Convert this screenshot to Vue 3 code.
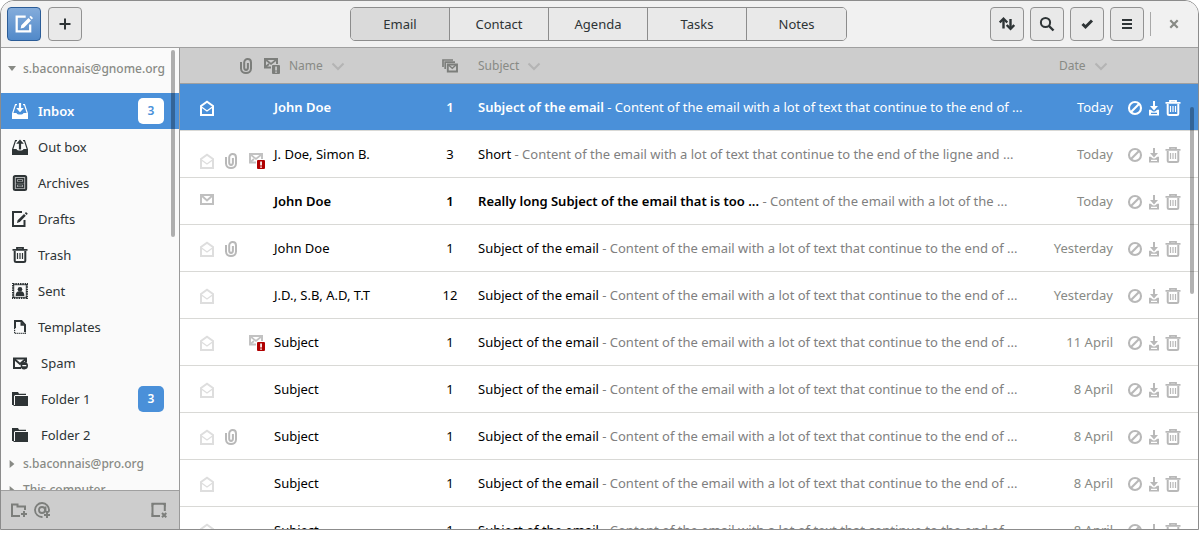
<script setup>
import { ref } from 'vue'

const tabs = ['Email', 'Contact', 'Agenda', 'Tasks', 'Notes']
const activeTab = ref('Email')

const folders = [
  { name: 'Inbox', icon: 'inbox', count: 3 },
  { name: 'Out box', icon: 'outbox' },
  { name: 'Archives', icon: 'archive' },
  { name: 'Drafts', icon: 'draft' },
  { name: 'Trash', icon: 'trash' },
  { name: 'Sent', icon: 'stamp' },
  { name: 'Templates', icon: 'template' },
  { name: 'Spam', icon: 'spam', wide: true },
  { name: 'Folder 1', icon: 'folder', count: 3, wide: true },
  { name: 'Folder 2', icon: 'folder', wide: true },
]
const activeFolder = ref('Inbox')

const long = 'Content of the email with a lot of text that continue to the end of ...'
const mails = [
  { from: 'John Doe', n: 1, subject: 'Subject of the email', text: long, date: 'Today', selected: true, strong: true },
  { from: 'J. Doe, Simon B.', n: 3, subject: 'Short', text: 'Content of the email with a lot of text that continue to the end of the ligne and ...', date: 'Today', clip: true, flag: true, low: true },
  { from: 'John Doe', n: 1, subject: 'Really long Subject of the email that is too ...', text: 'Content of the email with a lot of the ...', date: 'Today', unread: true, strong: true },
  { from: 'John Doe', n: 1, subject: 'Subject of the email', text: long, date: 'Yesterday', clip: true },
  { from: 'J.D., S.B, A.D, T.T', n: 12, subject: 'Subject of the email', text: long, date: 'Yesterday' },
  { from: 'Subject', n: 1, subject: 'Subject of the email', text: long, date: '11 April', flag: true },
  { from: 'Subject', n: 1, subject: 'Subject of the email', text: long, date: '8 April' },
  { from: 'Subject', n: 1, subject: 'Subject of the email', text: long, date: '8 April', clip: true },
  { from: 'Subject', n: 1, subject: 'Subject of the email', text: long, date: '8 April' },
  { from: 'Subject', n: 1, subject: 'Subject of the email', text: long, date: '8 April' },
]
const actions = [
  { icon: 'block', label: 'Block' },
  { icon: 'save', label: 'Save' },
  { icon: 'trash', label: 'Delete' },
]
</script>

<template>
  <svg class="sprite" aria-hidden="true">
    <symbol id="compose" viewBox="0 0 16 16">
      <path d="M9.500 1.500H1.500v13h12V8.500" fill="none" stroke="currentColor" stroke-width="2" />
      <path d="M5 12l.6-3L12 2.600l2.200 2.200L7.900 11.300z M12.800 1.800L14 .6l2 2-1.100 1.300z" fill="currentColor" />
    </symbol>
    <symbol id="draft" viewBox="0 0 16 16">
      <path d="M10 1H1v14h11.500V9" fill="none" stroke="currentColor" stroke-width="2" />
      <path d="M5 12l.6-2.800L12 3l1.800 1.800L7.800 11z M12.800 2.200L14 1l1.800 1.800-1.200 1.200z" fill="currentColor" />
    </symbol>
    <symbol id="inbox" viewBox="0 0 16 16">
      <path d="M0 10h4.500c.5 2 6.500 2 7 0H16v6H0z" fill="currentColor" />
      <path d="M.6 10.500L3.500 1.600H5M15.400 10.500l-2.900-8.900H11" fill="none" stroke="currentColor" stroke-width="1.200" />
      <path d="M6.900 0h2.200v5h2.700L8 9.200 4.200 5h2.700z" fill="currentColor" />
    </symbol>
    <symbol id="outbox" viewBox="0 0 16 16">
      <path d="M0 10h4.500c.5 2 6.500 2 7 0H16v6H0z" fill="currentColor" />
      <path d="M.6 10.500L3.500 1.600H5M15.400 10.500l-2.900-8.900H11" fill="none" stroke="currentColor" stroke-width="1.200" />
      <path d="M6.900 10.500h2.200V4.700h2.700L8 .5 4.200 4.700h2.700z" fill="currentColor" />
    </symbol>
    <symbol id="archive" viewBox="0 0 16 16">
      <rect x="1.800" y="1" width="12.400" height="14" rx="1.500" fill="currentColor" fill-opacity=".35" stroke="currentColor" stroke-width="2" />
      <path d="M4.500 3.700h7v3.600h-7zM4.500 9h7v3.600h-7z" fill="none" stroke="currentColor" stroke-width="1.300" />
      <path d="M6 5h4v1.300H6zM6 10.300h4v1.300H6z" fill="currentColor" />
    </symbol>
    <symbol id="trash" viewBox="0 0 16 16">
      <path d="M2.700 4v9.500q0 1.500 1.500 1.500h7.600q1.500 0 1.500-1.500V4" fill="none" stroke="currentColor" stroke-width="2" />
      <path d="M.5 2.800h15M5 2.200V.9h6v1.300" fill="none" stroke="currentColor" stroke-width="1.800" />
      <path d="M5.500 6v6M8 6v6M10.500 6v6" stroke="currentColor" stroke-width="1.200" />
    </symbol>
    <symbol id="stamp" viewBox="0 0 16 16">
      <rect x="1" y="1" width="14" height="14" fill="none" stroke="currentColor" stroke-width="2" stroke-dasharray="1.500 .83" />
      <rect x="1.800" y="1.800" width="12.400" height="12.400" fill="none" stroke="currentColor" stroke-width=".8" />
      <circle cx="8" cy="6.200" r="2.300" fill="currentColor" />
      <path d="M3.700 13c0-3.500 1.300-4.800 4.300-4.800s4.300 1.300 4.300 4.800z" fill="currentColor" />
    </symbol>
    <symbol id="template" viewBox="0 0 16 16">
      <path d="M3 9V2h6.500L13 5.800V13" fill="none" stroke="currentColor" stroke-width="2" />
      <path d="M8.500 2l4.500 4.800H8.500z" fill="currentColor" />
      <path d="M2.600 9v5.400h10.800V12" fill="none" stroke="currentColor" stroke-width="1.200" stroke-dasharray="1.200 .8" />
    </symbol>
    <symbol id="spam" viewBox="0 0 16 16">
      <path d="M9 13H2V3.500h12v4" fill="none" stroke="currentColor" stroke-width="2" />
      <path d="M2 3.800L8 9l6-5.200" fill="none" stroke="currentColor" stroke-width="2" />
      <path fill-rule="evenodd" d="M12.300 7a3.700 3.700 0 1 1 0 7.400 3.700 3.700 0 0 1 0-7.400zM10.300 10.100v1.200h4v-1.200z" fill="currentColor" />
    </symbol>
    <symbol id="folder" viewBox="0 0 16 16">
      <path d="M0 1h6l1 1.700h7V4H3.200L2 5v9H0z" fill="currentColor" />
      <path d="M3 5h13v10H1.500V14H3z" fill="currentColor" />
    </symbol>
    <symbol id="open-mail" viewBox="0 0 16 16">
      <path d="M2 15V6l6-4.300L14 6v9z" fill="none" stroke="currentColor" stroke-width="2" />
      <path d="M2.500 7L8 11 13.500 7" fill="none" stroke="currentColor" stroke-width="1.300" />
    </symbol>
    <symbol id="mail" viewBox="0 0 16 16">
      <path d="M2 1h12v9H2z" fill="none" stroke="currentColor" stroke-width="2" />
      <path d="M2.500 1.500L8 6.500l5.500-5" fill="none" stroke="currentColor" stroke-width="2" />
    </symbol>
    <symbol id="clip" viewBox="0 0 16 16">
      <path d="M3 4v6.500c0 6 10 6 10 0V4.500c0-4.600-6.800-4.600-6.800 0v5.300c0 2.800 3.700 2.800 3.700 0V5" fill="none" stroke="currentColor" stroke-width="2" />
    </symbol>
    <symbol id="flagged" viewBox="0 0 16 16">
      <path d="M7 9.500H1V1h12v5" fill="none" stroke="currentColor" stroke-width="2" />
      <path d="M1.500 1.500L7 6l5.500-4.500M1.500 9l3.500-3" fill="none" stroke="currentColor" stroke-width="1.700" />
      <path class="alert" fill-rule="evenodd" d="M9 7h6q1 0 1 1v7q0 1-1 1H9q-1 0-1-1V8q0-1 1-1zM11.200 8.500v4h1.700v-4zM11.200 13.400v1.400h1.700v-1.400z" />
    </symbol>
    <symbol id="stack" viewBox="0 0 16 16">
      <path d="M1 9V2h10M3.200 11V4.200H13" fill="none" stroke="currentColor" stroke-width="1.700" />
      <path d="M5.800 6.500h9.200v7H5.800z" fill="none" stroke="currentColor" stroke-width="1.900" />
      <path d="M6.500 7l3.800 3.200L14 7" fill="none" stroke="currentColor" stroke-width="1.500" />
    </symbol>
    <symbol id="chevron" viewBox="0 0 16 16">
      <path d="M2.500 5.500L8 11 13.500 5.500" fill="none" stroke="currentColor" stroke-width="2" />
    </symbol>
    <symbol id="block" viewBox="0 0 16 16">
      <circle cx="8" cy="8" r="6" fill="none" stroke="currentColor" stroke-width="2.100" />
      <path d="M4 12l8-8" stroke="currentColor" stroke-width="2.100" />
    </symbol>
    <symbol id="save" viewBox="0 0 16 16">
      <path d="M7 1h2v5h3L8 10.500 4 6h3z" fill="currentColor" />
      <path fill-rule="evenodd" d="M3 9.800h1.800L7 11.500h2l2.200-1.700H13V15.500H3zM5 12.800v1.200h6v-1.200z" fill="currentColor" />
    </symbol>
    <symbol id="plus" viewBox="0 0 16 16">
      <path d="M8 2.500v11M2.500 8h11" stroke="currentColor" stroke-width="2" />
    </symbol>
    <symbol id="sync" viewBox="0 0 16 16">
      <path d="M4.500 12.500V3M11.500 3v9.500" stroke="currentColor" stroke-width="2.400" />
      <path d="M.7 6.500l3.800-3.900 3.800 3.900M7.700 9l3.800 3.900L15.300 9" fill="none" stroke="currentColor" stroke-width="2.400" />
    </symbol>
    <symbol id="search" viewBox="0 0 16 16">
      <circle cx="6.500" cy="6.500" r="4.600" fill="none" stroke="currentColor" stroke-width="2" />
      <path d="M10 10l4.500 4.500" stroke="currentColor" stroke-width="2.400" />
    </symbol>
    <symbol id="check" viewBox="0 0 16 16">
      <path d="M3.500 8l3 3 6.500-6.500" fill="none" stroke="currentColor" stroke-width="3" />
    </symbol>
    <symbol id="menu" viewBox="0 0 16 16">
      <path d="M3 4h10M3 8h10M3 12h10" stroke="currentColor" stroke-width="2" />
    </symbol>
    <symbol id="close" viewBox="0 0 16 16">
      <path d="M4.300 4.300l7.400 7.400M11.700 4.300l-7.400 7.400" stroke="currentColor" stroke-width="2.200" />
    </symbol>
    <symbol id="new-folder" viewBox="0 0 16 16">
      <path d="M9 14H1V2.500h5.500v2H14V8" fill="none" stroke="currentColor" stroke-width="2" />
      <path d="M13 9v6M10 12h6" stroke="currentColor" stroke-width="2" />
    </symbol>
    <symbol id="new-account" viewBox="0 0 16 16">
      <path d="M8.500 15A7 7 0 1 1 15 8.500c0 2-3.500 2-3.500 0V4.500" fill="none" stroke="currentColor" stroke-width="1.800" />
      <circle cx="8" cy="8" r="3" fill="none" stroke="currentColor" stroke-width="1.800" />
      <path d="M13 10v6M10 13h6" stroke="currentColor" stroke-width="2" />
    </symbol>
    <symbol id="remove-account" viewBox="0 0 16 16">
      <path d="M9 14H1.500V1.800h12.300V9" fill="none" stroke="currentColor" stroke-width="2" />
      <path d="M.6 1h4L.6 5zM14.700 1h-4l4 4zM.6 15h4l-4-4z" fill="currentColor" />
      <path d="M11 11l4.300 4.300M15.300 11L11 15.300" stroke="currentColor" stroke-width="2" />
    </symbol>
  </svg>

  <div class="window">
    <header class="toolbar">
      <div class="tools">
        <button class="tool primary" aria-label="Compose"><svg class="icon large"><use href="#compose" /></svg></button>
        <button class="tool" aria-label="New"><svg class="icon"><use href="#plus" /></svg></button>
      </div>
      <nav class="tabs" aria-label="Sections">
        <button v-for="tab in tabs" :key="tab" class="tab" :class="{ active: tab === activeTab }" @click="activeTab = tab">{{ tab }}</button>
      </nav>
      <div class="tools end">
        <button class="tool" aria-label="Send and receive"><svg class="icon"><use href="#sync" /></svg></button>
        <button class="tool" aria-label="Search"><svg class="icon"><use href="#search" /></svg></button>
        <button class="tool" aria-label="Select"><svg class="icon"><use href="#check" /></svg></button>
        <button class="tool" aria-label="Menu"><svg class="icon"><use href="#menu" /></svg></button>
        <span class="divider"></span>
        <button class="bare close" aria-label="Close"><svg class="icon"><use href="#close" /></svg></button>
      </div>
    </header>

    <div class="body">
      <aside class="sidebar">
        <div class="accounts">
          <button class="account open"><span class="arrow"></span>s.baconnais@gnome.org</button>
          <ul class="folders">
            <li v-for="f in folders" :key="f.name">
              <button class="folder" :class="{ active: f.name === activeFolder, wide: f.wide }" @click="activeFolder = f.name">
                <svg class="icon"><use :href="'#' + f.icon" /></svg>
                <span class="name">{{ f.name }}</span>
                <span v-if="f.count" class="badge">{{ f.count }}</span>
              </button>
            </li>
          </ul>
          <button class="account"><span class="arrow"></span>s.baconnais@pro.org</button>
          <button class="account"><span class="arrow"></span>This computer</button>
          <span class="scrollbar side"></span>
        </div>
        <footer class="side-tools">
          <button class="bare" aria-label="New folder"><svg class="icon"><use href="#new-folder" /></svg></button>
          <button class="bare" aria-label="New account"><svg class="icon"><use href="#new-account" /></svg></button>
          <button class="bare last" aria-label="Remove account"><svg class="icon"><use href="#remove-account" /></svg></button>
        </footer>
      </aside>

      <main class="list">
        <table>
          <colgroup>
            <col class="c-state"><col class="c-clip"><col class="c-flag"><col class="c-from">
            <col class="c-count"><col class="c-subject"><col class="c-date"><col class="c-actions">
          </colgroup>
          <thead>
            <tr>
              <th colspan="4">
                <div class="sorts">
                  <svg class="icon"><use href="#clip" /></svg>
                  <svg class="icon flag"><use href="#flagged" /></svg>
                  <button class="bare sort">Name<svg class="icon"><use href="#chevron" /></svg></button>
                </div>
              </th>
              <th class="count"><svg class="icon"><use href="#stack" /></svg></th>
              <th class="by-subject"><button class="bare sort">Subject<svg class="icon"><use href="#chevron" /></svg></button></th>
              <th colspan="2" class="by-date"><button class="bare sort">Date<svg class="icon"><use href="#chevron" /></svg></button></th>
            </tr>
          </thead>
          <tbody>
            <tr v-for="(m, i) in mails" :key="i" :class="{ selected: m.selected, strong: m.strong, low: m.low }">
              <td class="mark" :class="{ unread: m.unread }"><svg class="icon"><use :href="m.unread ? '#mail' : '#open-mail'" /></svg></td>
              <td class="mark clip"><svg v-if="m.clip" class="icon"><use href="#clip" /></svg></td>
              <td class="mark flag"><svg v-if="m.flag" class="icon"><use href="#flagged" /></svg></td>
              <td class="from">{{ m.from }}</td>
              <td class="count">{{ m.n }}</td>
              <td class="subject"><span class="title">{{ m.subject }}</span> - {{ m.text }}</td>
              <td class="date">{{ m.date }}</td>
              <td>
                <div class="actions">
                  <button v-for="a in actions" :key="a.icon" class="bare" :aria-label="a.label"><svg class="icon"><use :href="'#' + a.icon" /></svg></button>
                </div>
              </td>
            </tr>
          </tbody>
        </table>
        <span class="scrollbar main"></span>
      </main>
    </div>
  </div>
</template>

<style>
body { background: #fff; overflow: hidden; }
#flagged .alert { fill: var(--alert, currentColor); }
</style>

<style scoped>
.sprite { position: absolute; width: 0; height: 0; }
.window {
  box-sizing: border-box;
  display: flex;
  flex-direction: column;
  height: calc(100vh - 10px);
  margin-right: 1px;
  border: 1px solid #8c8c8c;
  border-radius: 14px 14px 0 0;
  overflow: hidden;
  background: #fff;
  color: #2e3436;
  font: 13px/18px "Noto Sans", sans-serif;
}
button { font: inherit; color: inherit; cursor: pointer; }
.icon { display: block; width: 16px; height: 16px; flex: none; }
.icon.large { width: 18px; height: 18px; }
.bare { padding: 0; border: 0; background: none; }

.toolbar {
  display: grid;
  grid-template-columns: 1fr auto 1fr;
  align-items: center;
  flex: none;
  height: 46px;
  padding: 0 8px 0 6px;
  background: #f1f1f1;
  border-bottom: 1px solid #a0a0a0;
}
.tools { display: flex; align-items: center; gap: 7px; }
.tools.end { justify-content: flex-end; gap: 6px; }
.tool {
  display: flex;
  align-items: center;
  justify-content: center;
  width: 34px;
  height: 34px;
  padding: 0;
  border: 1px solid #929292;
  border-radius: 4px;
  background: #e9e9e9;
}
.tool.primary { color: #fff; border-color: #2b5c97; background: linear-gradient(#84acdb, #5189c9); }
.divider { width: 1px; height: 24px; background: #a8a8a8; }
.close { color: #888a85; padding: 0 8px 0 9px; }
.tabs { display: flex; border: 1px solid #8c8c8c; border-radius: 5px; overflow: hidden; }
.tab {
  width: 99px;
  height: 32px;
  padding: 0;
  border: 0;
  border-right: 1px solid #8c8c8c;
  background: #e9e9e9;
}
.tab:last-child { border-right: 0; }
.tab.active { background: #dadada; }

.body { display: flex; flex: 1; min-height: 0; }
.sidebar {
  display: flex;
  flex-direction: column;
  flex: none;
  width: 178px;
  background: #fafafa;
  border-right: 1px solid #9a9a9a;
}
.accounts { position: relative; flex: 1; min-height: 0; overflow: hidden; }
.account {
  display: flex;
  align-items: center;
  gap: 7px;
  width: 100%;
  height: 26px;
  padding: 0 0 4px 7px;
  border: 0;
  background: none;
  color: #888a85;
  font-size: 12px;
  font-weight: 500;
  white-space: nowrap;
}
.account.open { height: 45px; }
.arrow { width: 8px; height: 8px; background: #888a85; clip-path: polygon(20% 0, 80% 50%, 20% 100%); }
.open .arrow { clip-path: polygon(0 20%, 100% 20%, 50% 80%); }
.folders { margin: 0; padding: 0; list-style: none; }
.folder {
  display: flex;
  align-items: center;
  gap: 10px;
  width: 100%;
  height: 36px;
  padding: 0 15px 0 11px;
  border: 0;
  background: none;
  text-align: left;
}
.folder.wide { gap: 13px; }
.folder.active { background: #4a90d9; color: #fff; font-weight: 600; }
.name { flex: 1; }
.badge {
  width: 26px;
  line-height: 26px;
  border-radius: 5px;
  background: #4a90d9;
  color: #fff;
  font-size: 12px;
  font-weight: 600;
  text-align: center;
}
.active .badge { background: #fff; color: #4a90d9; }
.side-tools {
  display: flex;
  align-items: center;
  flex: none;
  gap: 7px;
  height: 38px;
  padding: 0 12px 0 10px;
  background: #cdcdcd;
  border-top: 1px solid #a0a0a0;
  color: #7c7e7b;
}
.last { margin-left: auto; }

.list { position: relative; flex: 1; min-width: 0; overflow: hidden; }
table { width: 100%; border-collapse: separate; border-spacing: 0; table-layout: fixed; }
.c-state { width: 39px; }
.c-clip { width: 25px; }
.c-flag { width: 30px; }
.c-from { width: 156px; }
.c-count { width: 40px; }
.c-date { width: 96px; }
.c-actions { width: 71px; }
th { height: 35px; padding: 0; background: #cdcdcd; border-bottom: 1px solid #a0a0a0; color: #888a85; font-weight: 400; text-align: left; }
.sorts { display: flex; align-items: center; padding-left: 58px; color: #7c7e7b; }
.sorts .flag { margin-left: 10px; }
.sorts .sort { margin-left: 9px; }
.sort { display: flex; align-items: center; gap: 7px; color: #888a85; font-size: 12px; }
.sort .icon { color: #b4b4b4; }
.by-subject { padding-left: 8px; }
.by-date { padding-left: 28px; }

td { box-sizing: border-box; height: 47px; padding: 0; border-bottom: 1px solid #d9d9d6; color: #000; white-space: nowrap; vertical-align: middle; }
.mark { color: #dedede; padding: 2px 0 0 19px; }
.mark.unread { color: #c0c0c0; }
.mark.clip { color: #b8b8b8; padding-left: 4px; }
.mark.flag { color: #c2c2c2; padding-left: 5px; --alert: #b00000; }
.low .mark { vertical-align: bottom; padding-bottom: 8px; }
.count { text-align: center; }
th.count .icon { margin: 0 auto; color: #7c7e7b; }
.subject { padding-left: 8px; color: #808080; overflow: hidden; }
.title { color: #000; }
.date { padding-right: 14px; color: #888a85; text-align: right; }
.strong .from, .strong .count, .strong .title { font-weight: 600; }
.actions { display: flex; gap: 3px; padding-top: 2px; color: #b8b8b8; }
.selected td { background: #4a90d9; }
.selected td, .selected .title, .selected .actions { color: #fff; }
.scrollbar { position: absolute; width: 4px; border-radius: 2px; background: rgba(0, 0, 0, .3); }
.side { top: 2px; right: 4px; height: 187px; }
.main { top: 59px; right: 4px; height: 187px; }
</style>
